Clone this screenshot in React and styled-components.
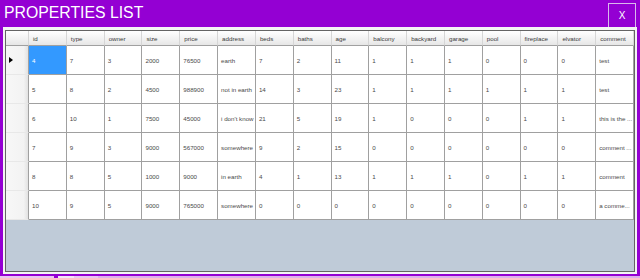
import React from "react";
import styled, { createGlobalStyle } from "styled-components";

const GlobalStyle = createGlobalStyle`
  html, body {
    margin: 0;
    padding: 0;
    background: #9400d3;
  }
  body {
    font-family: "Liberation Sans", Arial, sans-serif;
  }
`;

const columns = [
  "id", "type", "owner", "size", "price", "address", "beds", "baths", "age",
  "balcony", "backyard", "garage", "pool", "fireplace", "elvator", "comment",
];

const rows = [
  ["4", "7", "3", "2000", "76500", "earth", "7", "2", "11", "1", "1", "1", "0", "0", "0", "test"],
  ["5", "8", "2", "4500", "988900", "not in earth", "14", "3", "23", "1", "1", "1", "1", "1", "1", "test"],
  ["6", "10", "1", "7500", "45000", "i don't know", "21", "5", "19", "1", "0", "0", "0", "1", "1", "this is the ..."],
  ["7", "9", "3", "9000", "567000", "somewhere", "9", "2", "15", "0", "0", "0", "0", "0", "0", "comment ..."],
  ["8", "8", "5", "1000", "9000", "in earth", "4", "1", "13", "1", "1", "1", "0", "1", "1", "comment"],
  ["10", "9", "5", "9000", "765000", "somewhere", "0", "0", "0", "0", "0", "0", "0", "0", "0", "a comme..."],
];

const Page = styled.div`
  width: 640px;
  height: 278px;
  display: flex;
  flex-direction: column;
  background: #9400d3;
  overflow: hidden;
`;

const TitleBar = styled.div`
  height: 27px;
  display: flex;
  align-items: flex-start;
  justify-content: space-between;
  padding: 0 4px 0 4px;
  box-sizing: border-box;
`;

const Title = styled.h1`
  margin: 4px 0 0 0;
  font-size: 15.8px;
  font-weight: normal;
  color: #ffffff;
`;

const CloseButton = styled.button`
  margin-top: 3px;
  width: 28px;
  height: 25px;
  border: 1px solid #d9b8ec;
  background: #9400d3;
  color: #ffffff;
  font-family: "Liberation Sans", Arial, sans-serif;
  font-size: 10px;
  padding: 0;
`;

const Frame = styled.div`
  margin: 0 3px;
  height: 247px;
  border: 2px solid #f4f4f4;
  border-top-width: 3px;
  box-sizing: border-box;
`;

const Grid = styled.div`
  height: 100%;
  border: 1px solid #646464;
  box-sizing: border-box;
  display: flex;
  flex-direction: column;
  background: #bfcbd8;
  font-size: 6.2px;
  color: #4a4a4a;
`;

const Row = styled.div`
  display: grid;
  grid-template-columns: 23px repeat(16, 1fr);
  height: ${({ $head }) => ($head ? "15px" : "29px")};
  background: #ffffff;
`;

const HeadCell = styled.div`
  display: flex;
  align-items: center;
  padding-left: 4px;
  background: linear-gradient(#ffffff, #f1f1f1 60%, #e6e6e6);
  border-right: 1px solid #d6d6d6;
  border-bottom: 1px solid #a0a0a0;
  white-space: nowrap;
  overflow: hidden;
  color: #3a3a3a;
`;

const RowHead = styled.div`
  display: flex;
  align-items: center;
  padding-left: 3px;
  background: linear-gradient(90deg, #f7f7f7, #f3f3f3 80%, #e2e2e2);
  border-right: 1px solid #a0a0a0;
  border-bottom: 1px solid #e8e8e8;
`;

const Cell = styled.div`
  display: flex;
  align-items: center;
  padding-left: 3px;
  border-right: 1px solid #a0a0a0;
  border-bottom: 1px solid #a0a0a0;
  white-space: nowrap;
  overflow: hidden;
  background: ${({ $selected }) => ($selected ? "#3399ff" : "#ffffff")};
  color: ${({ $selected }) => ($selected ? "#ffffff" : "#4a4a4a")};
`;

const Empty = styled.div`
  flex: 1;
  background: #bfcbd8;
`;

const BottomStrip = styled.div`
  margin-top: 2px;
  height: 2px;
  display: flex;
`;

const StripPart = styled.div`
  width: ${({ $w }) => $w}px;
  background: ${({ $c }) => $c};
`;

const Arrow = () => (
  <svg width="4" height="6" viewBox="0 0 4 6">
    <polygon points="0,0 4,3 0,6" fill="#000" />
  </svg>
);

export default function App() {
  return (
    <Page>
      <GlobalStyle />
      <TitleBar>
        <Title>PROPERTIES LIST</Title>
        <CloseButton>X</CloseButton>
      </TitleBar>
      <Frame>
        <Grid>
          <Row $head>
            <HeadCell />
            {columns.map((c) => (
              <HeadCell key={c}>{c}</HeadCell>
            ))}
          </Row>
          {rows.map((r, i) => (
            <Row key={i}>
              <RowHead>{i === 0 && <Arrow />}</RowHead>
              {r.map((v, j) => (
                <Cell key={j} $selected={i === 0 && j === 0}>
                  {v}
                </Cell>
              ))}
            </Row>
          ))}
          <Empty />
        </Grid>
      </Frame>
      <BottomStrip>
        <StripPart $w={54} $c="#e9c6f2" />
        <StripPart $w={4} $c="#9400d3" />
        <StripPart $w={16} $c="#f2e4f7" />
        <StripPart $w={24} $c="#e9c6f2" />
        <StripPart $w={542} $c="#dcb0ec" />
      </BottomStrip>
    </Page>
  );
}
